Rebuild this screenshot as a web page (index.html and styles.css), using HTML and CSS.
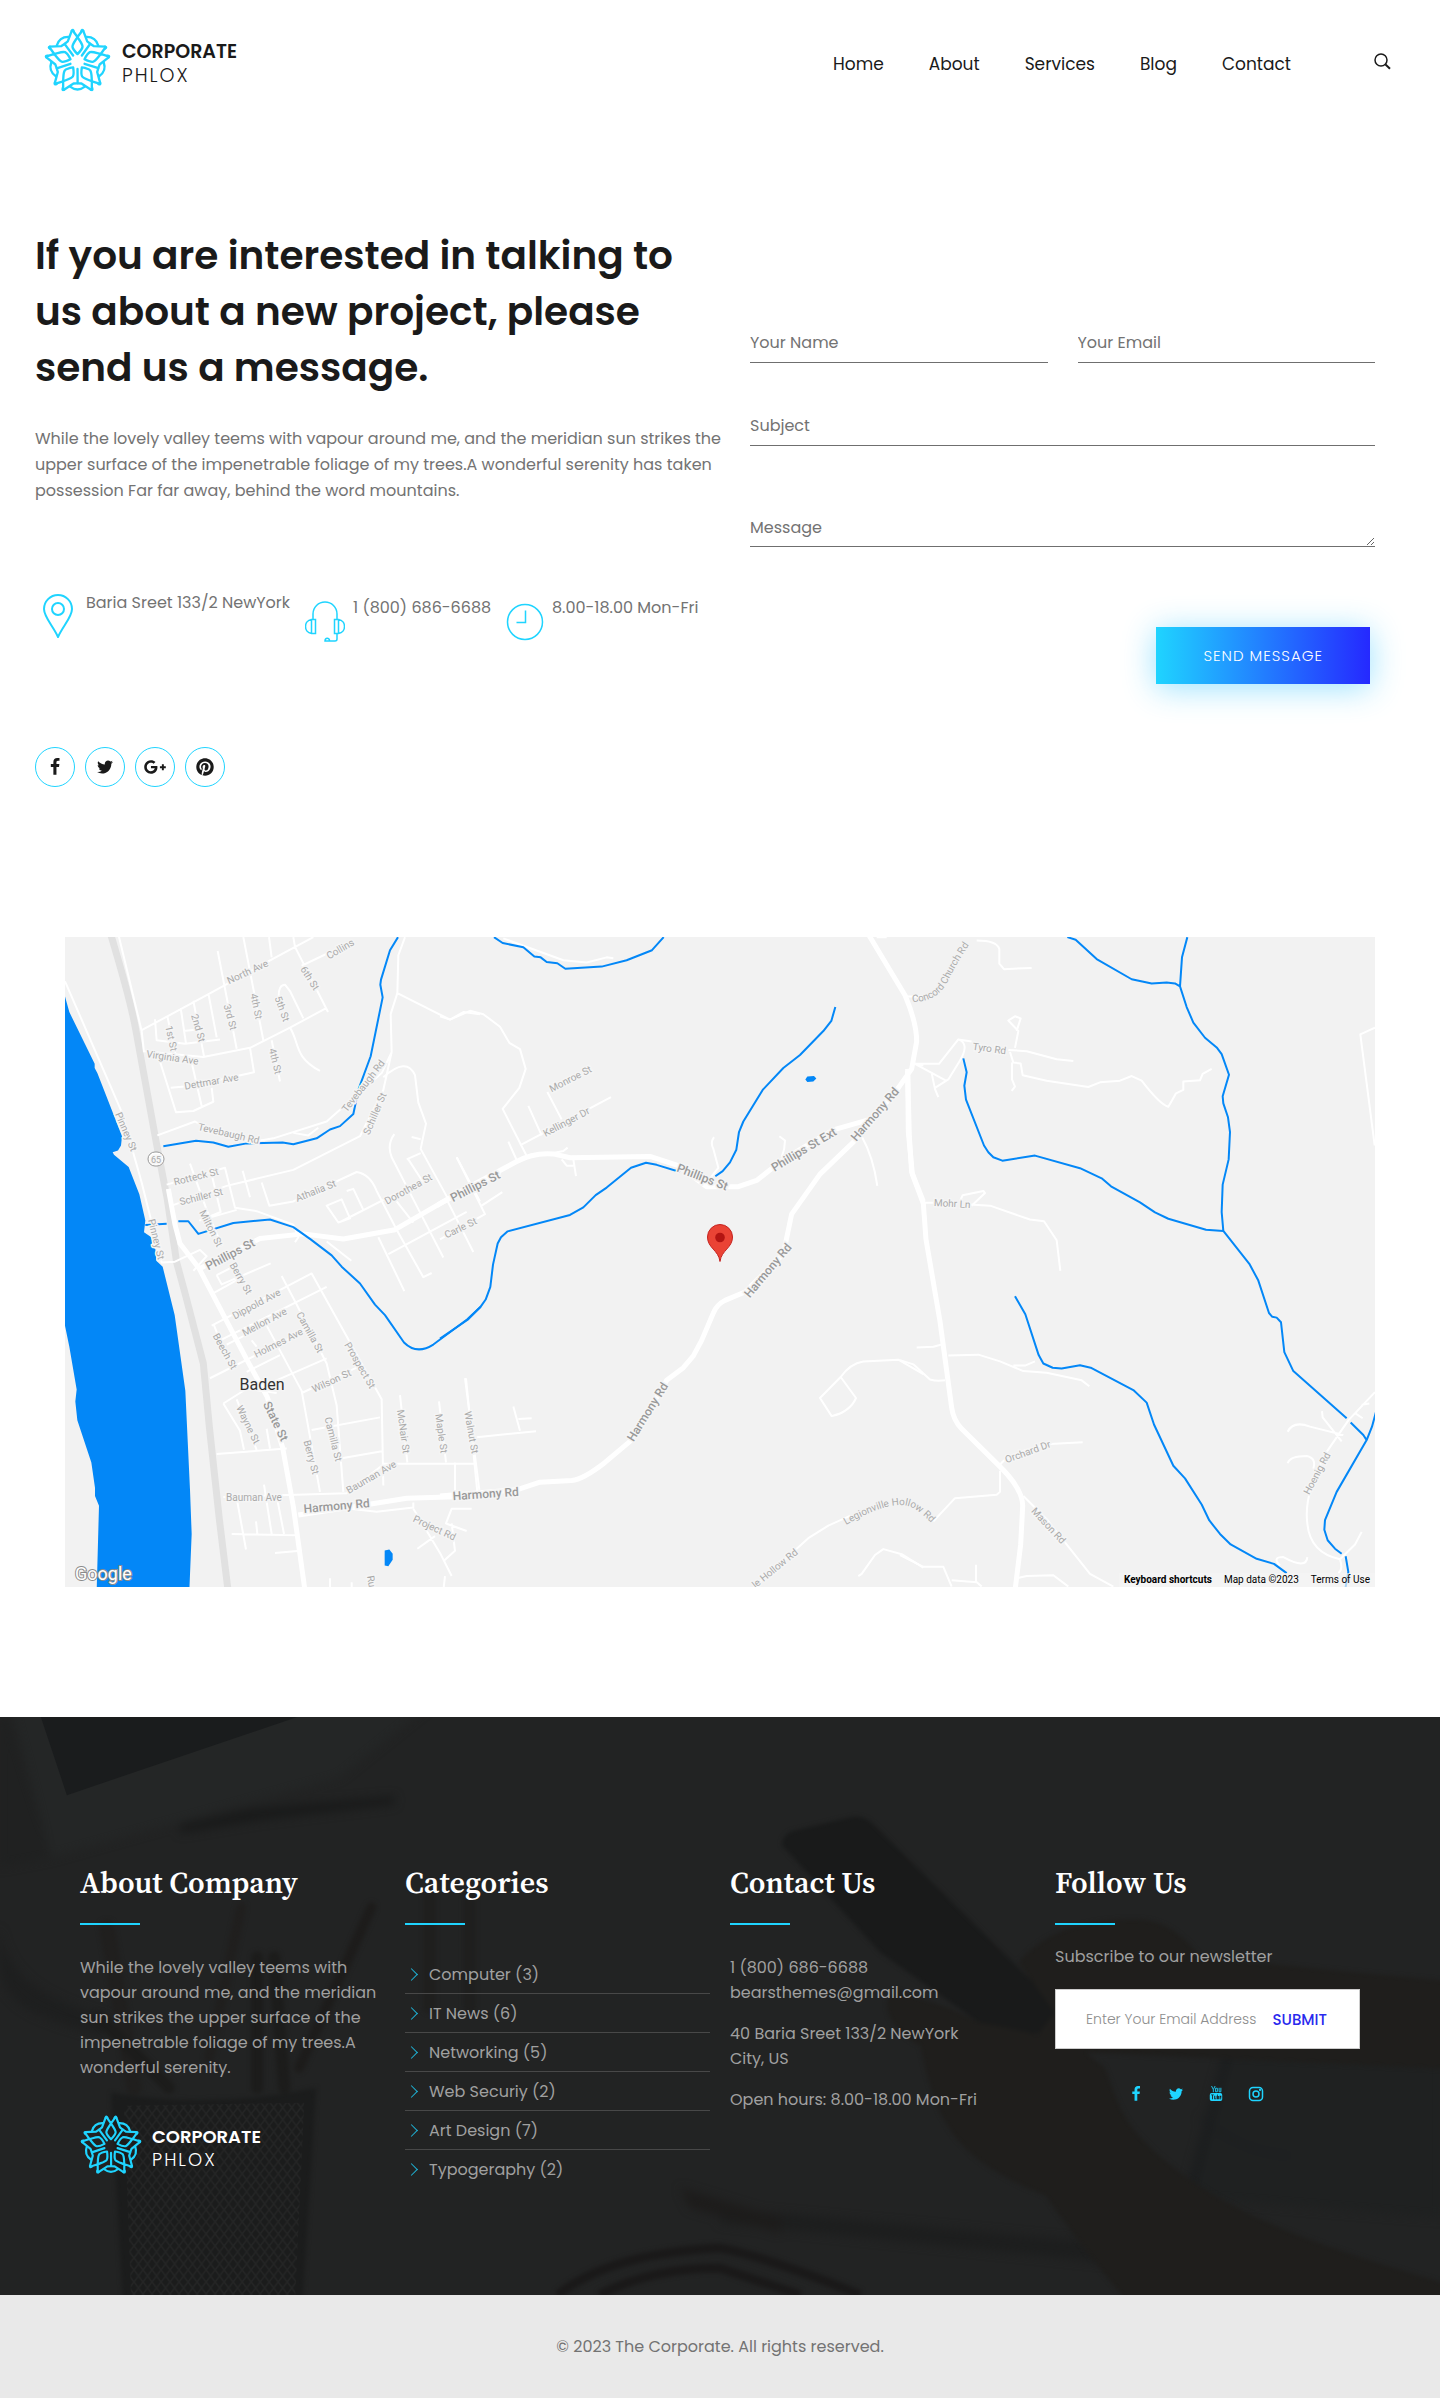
FILE: index.html
```html
<!DOCTYPE html>
<html lang="en">
<head>
<meta charset="utf-8">
<meta name="viewport" content="width=device-width, initial-scale=1">
<title>Contact – Corporate Phlox</title>
<link rel="stylesheet" href="styles.css">
</head>
<body>
<svg class="sprite" aria-hidden="true">
  <symbol id="phlox" viewBox="-100 -100 200 200">
    <g id="petal" fill="none" stroke="currentColor" stroke-width="7" stroke-linejoin="round" stroke-linecap="round">
      <path d="M-14 -92L0 -73C8 -60 15 -52 15 -44Q14 -36 0 -22M14 -92L0 -73C-8 -60 -15 -52 -15 -44Q-14 -36 0 -22"/>
      <path d="M-17 -92Q-14 -98 -11 -90M17 -92Q14 -98 11 -90"/>
      <path d="M-17 -92L-29 -60L-38 -53M17 -92L29 -60L38 -53L13 -18"/>
      <path d="M-22 75Q0 92 22 75"/>
    </g>
    <use href="#petal" transform="rotate(72)"/>
    <use href="#petal" transform="rotate(144)"/>
    <use href="#petal" transform="rotate(216)"/>
    <use href="#petal" transform="rotate(288)"/>
  </symbol>
  <symbol id="facebook" viewBox="0 0 1792 1792"><path d="M1343 12v264h-157q-86 0-116 36t-30 108v189h293l-39 296h-254v759h-306v-759h-255v-296h255v-218q0-186 104-288.500t277-102.500q147 0 228 12z"/></symbol>
  <symbol id="twitter" viewBox="0 0 1792 1792"><path d="M1684 408q-67 98-162 167 1 14 1 42 0 130-38 259.500t-115.500 248.500-184.500 210.500-258 146-323 54.500q-271 0-496-145 35 4 78 4 225 0 401-138-105-2-188-64.500t-114-159.500q33 5 61 5 43 0 85-11-112-23-185.500-111.500t-73.500-205.500v-4q68 38 146 41-66-44-105-115t-39-154q0-88 44-163 121 149 294.500 238.500t371.500 99.500q-8-38-8-74 0-134 94.500-228.500t228.500-94.500q140 0 236 102 109-21 205-78-37 115-142 178 93-10 186-50z"/></symbol>
  <symbol id="gplus" viewBox="0 0 640 512"><path d="M386.061 228.496c1.834 9.692 3.143 19.384 3.143 31.956C389.204 370.205 315.599 448 204.800 448c-106.084 0-192-85.915-192-192s85.916-192 192-192c51.864 0 95.083 18.859 128.611 50.292l-52.126 50.030c-14.145-13.621-39.028-29.599-76.485-29.599-65.484 0-118.920 54.221-118.920 121.277 0 67.056 53.436 121.277 118.920 121.277 75.961 0 104.513-54.745 108.965-82.773H204.800v-66.009h181.261zm185.406 6.437V179.200h-56.001v55.733h-55.733v56.001h55.733v55.733h56.001v-55.733H627.200v-56.001h-55.733z"/></symbol>
  <symbol id="pinterest" viewBox="0 0 496 512"><path d="M496 256c0 137-111 248-248 248-25.600 0-50.200-3.900-73.400-11.100 10.100-16.500 25.200-43.500 30.800-65 3-11.600 15.400-59 15.400-59 8.100 15.400 31.700 28.500 56.800 28.500 74.800 0 128.700-68.800 128.700-154.300 0-81.900-66.900-143.200-152.900-143.200-107 0-163.900 71.800-163.900 150.100 0 36.400 19.400 81.700 50.300 96.100 4.700 2.200 7.200 1.200 8.300-3.300.8-3.400 5-20.300 6.900-28.100.6-2.500.3-4.700-1.700-7.100-10.100-12.500-18.300-35.300-18.300-56.600 0-54.700 41.400-107.600 112-107.600 60.900 0 103.600 41.500 103.600 100.900 0 67.100-33.900 113.600-78 113.600-24.300 0-42.600-20.100-36.700-44.800 7-29.500 20.500-61.300 20.500-82.600 0-19-10.200-34.900-31.400-34.900-24.900 0-44.900 25.700-44.900 60.200 0 22 7.400 36.800 7.400 36.800s-24.500 103.800-29 123.200c-5 21.400-3 51.600-.9 71.200C65.400 450.900 0 361.100 0 256 0 119 111 8 248 8s248 111 248 248z"/></symbol>
</svg>

<header class="site-header">
  <a class="logo" href="#">
    <svg class="logo-mark" aria-hidden="true"><use href="#phlox"/></svg>
    <span class="logo-text"><b>CORPORATE</b><span>PHLOX</span></span>
  </a>
  <nav class="main-nav" aria-label="Main">
    <a href="#">Home</a><a href="#">About</a><a href="#">Services</a><a href="#">Blog</a><a href="#">Contact</a>
  </nav>
  <button class="search" type="button" aria-label="Search">
    <svg viewBox="0 0 17 17" width="17" height="17" fill="none" stroke="currentColor"><circle cx="7" cy="7" r="6" stroke-width="1.500"/><path d="M11.500 11.500L16 15.800" stroke-width="2"/></svg>
  </button>
</header>

<main>
  <section class="contact">
    <div class="intro">
      <h1>If you are interested in talking to us about a new project, please send us a message.</h1>
      <p>While the lovely valley teems with vapour around me, and the meridian sun strikes the upper surface of the impenetrable foliage of my trees.A wonderful serenity has taken possession Far far away, behind the word mountains.</p>
      <ul class="info">
        <li class="place">
          <svg viewBox="0 0 30 44" width="30" height="44"><path d="M15 43C10 32 1 23 1 15a14 14 0 0 1 28 0C29 23 20 32 15 43z"/><circle cx="15" cy="15" r="6"/></svg>
          <span>Baria Sreet 133/2 NewYork</span>
        </li>
        <li>
          <svg class="thin" viewBox="0 0 40 41" width="40" height="41"><path d="M8 18V13a12 12 0 0 1 24 0v5M6.500 18.500h4v14h-4zM29.500 18.500h4v14h-4zM6.500 18.500C-1.500 19.500 -1.500 31.500 6.500 32.500M33.500 18.500C41.500 19.500 41.500 31.500 33.500 32.500M32 33v5q0 2-2 2H20c0-3.500 4.500-3.500 4.500-.5"/></svg>
          <span>1 (800) 686-6688</span>
        </li>
        <li>
          <svg class="clock" viewBox="0 0 38 38" width="38" height="38"><circle cx="19" cy="19" r="17.500"/><path d="M19.500 7.500v12H10.500"/></svg>
          <span>8.00-18.00 Mon-Fri</span>
        </li>
      </ul>
      <div class="social-round">
        <a href="#" aria-label="Facebook"><svg><use href="#facebook"/></svg></a>
        <a href="#" aria-label="Twitter"><svg><use href="#twitter"/></svg></a>
        <a href="#" aria-label="Google Plus"><svg class="wide"><use href="#gplus"/></svg></a>
        <a href="#" aria-label="Pinterest"><svg><use href="#pinterest"/></svg></a>
      </div>
    </div>
    <form class="message-form">
      <div class="pair">
        <input type="text" aria-label="Your Name" placeholder="Your Name">
        <input type="email" aria-label="Your Email" placeholder="Your Email">
      </div>
      <input type="text" aria-label="Subject" placeholder="Subject">
      <textarea aria-label="Message" placeholder="Message"></textarea>
      <button class="send" type="submit">SEND MESSAGE</button>
    </form>
  </section>

  <section class="map" aria-label="Map of Baden">
    <svg class="map-canvas" viewBox="0 0 1310 650" preserveAspectRatio="xMidYMid slice">
      <!-- western sheet -->
      <g transform="translate(-5 -7) scale(.33333 .42088)">
        <path class="water" d="M15 158L28 195L104 318V328L112 340L186 490L183 512L174 524L158 528L162 534L206 563L238 628L256 690L252 718L274 730L277 752L286 758L289 786L308 800L344 915L376 1095L390 1330L395 1435L388 1570H110L117 1368L105 1345V1325L94 1265L52 1165L46 1120L50 1092L28 990L15 940z"/>
        <path class="water" d="M974 1474L988 1472L998 1482V1496L985 1512L974 1510z"/>
        <path class="hwy" d="M152 10C190 110 215 180 228 240L290 510L322 640L350 790L374 860L430 1030L448 1180L478 1400L505 1575"/>
        <path class="r5" d="M325 615L345 700L360 745L418 805L560 1020L622 1110L668 1230L700 1370L735 1570M418 805L600 733L730 722L850 734L1005 712L1140 650L1320 575M715 1390L900 1368L1040 1350L1260 1345"/>
        <path class="r2" d="M175 10L245 240L252 290M15 122L185 432L245 600L305 790L345 788L420 760L440 775L400 810M245 238L440 155L640 68L760 17M252 288L430 302L570 280L690 232L800 185M322 205L348 300M285 212L290 262L375 270L480 260M362 185L378 270M400 168L432 300M445 150L470 255M473 50L530 282M550 17L610 262M627 17L635 65M700 17L705 40L804 195M725 85L870 30M656 160Q655 130 675 130L690 145L730 210M690 232C720 270 700 300 780 335M635 262L660 360M570 280L582 338L400 370L332 375M295 300L348 433L400 430L460 408L455 375M395 315L425 418M370 240L420 236"/>
        <path class="r2" d="M292 488L405 455C500 500 560 510 640 495L800 455L965 340L995 290L992 200L1012 150L1015 60L1035 17M700 482L745 488L775 470M995 290L970 380L900 490L700 570L500 608L335 655M1012 150L1170 213L1210 195L1260 200M970 350Q1040 300 1065 345L1075 410L1098 460L1082 520L1165 640M1040 545L1082 530M1055 492L1082 497M320 605L495 565L525 660L590 668L700 700L715 730L705 742M390 555L440 665L480 740M450 565L482 670L420 690L530 665M548 572L570 635M605 600L628 655L700 645L890 575Q930 580 950 620L1010 712L1090 825L1115 815M1003 485Q980 510 995 540L1060 640L1150 778M845 640L800 655L835 695L870 685zM860 620L880 615L910 665M845 692L1060 605M985 770L1220 670M955 730L1033 858M1045 545L1090 600M1010 645L1060 695M800 740L874 786M1190 540L1260 645"/>
        <path class="r2" d="M470 820L485 842L632 792M455 865L540 828M470 820L520 800M455 940L755 816L965 1115L970 1320M460 935L480 975L800 848M500 985L650 925M450 1065L740 950M575 975L590 990M665 822L710 890L800 1030L830 1130L850 1335M620 940L725 1095L780 1335M725 1100L890 1040M560 1050L660 1010M620 1080L800 1018M490 1125L560 1090L650 1100M490 1125L540 1190L552 1235M530 1115L590 1235M620 1185L630 1232M470 1245L680 1232M755 1188L960 1158M845 1255L970 1238M1020 1105L1042 1265M1137 1120L1158 1265M1218 1065L1252 1335M970 1268H1250M1185 1265V1340M490 1347L860 1338L970 1270M530 1350L558 1472M612 1318L635 1435M650 1345L672 1435M515 1435L715 1438M588 1405L592 1435M645 1480L720 1475M870 1375L950 1382L1060 1372V1360M1060 1375L1140 1480L1175 1535M1235 1375H1175L1158 1410L1220 1428M1175 1410L1185 1475L1150 1500M1072 1470L1125 1440M810 1540V1570M875 1550V1570M1155 1535L1150 1570"/>
        <path class="creek" d="M310 514L408 501L460 505L505 515L560 507L668 505L700 509L770 495L810 474L840 466L880 437L895 380L932 300L968 160L961 130L963 118L990 48L1014 17M256 701L320 698M355 692H385L415 722L520 696L630 688L700 706L752 735L815 773L845 800L900 840L945 890L975 915L1032 980Q1070 1010 1120 985L1222 925L1262 895"/>
      </g>
      <!-- middle sheet -->
      <g transform="translate(375 -7) scale(.33333 .42088)">
        <path class="r5" d="M1285 10L1395 155Q1430 220 1430 265L1415 330L1375 375L1245 500L1140 580L1055 675L1030 770L915 860L855 880Q830 890 820 910L785 975L760 1012L730 1040L680 1070L570 1215L495 1265Q430 1305 395 1308L300 1312L230 1330L0 1345M-10 655L60 622L230 550Q280 528 340 532L390 541L630 538L715 560L800 610H895L950 595L1030 545L1180 475L1290 450M1403 335L1408 490L1415 575L1450 645"/>
        <path class="r2" d="M190 20L370 72L440 77L500 65L520 67M0 205L30 213L90 192L130 200L180 230L208 268L240 283L257 330L238 375L188 425L262 540M240 512L513 397M265 418L305 488M322 385L365 450M205 503L232 550M340 530L370 525L383 517M365 545L380 560H400M400 545L408 585M50 540L135 675L0 735M125 655L187 623M20 640L100 765M822 492Q810 505 820 520L835 565L810 590M1018 490L1035 500Q1035 520 1025 540M1265 490Q1300 540 1312 608M75 1065L118 1330M110 1205L288 1191M220 1132L240 1190M235 1162L275 1160M1202 1062L1140 1112L1175 1155Q1230 1145 1248 1112zM1202 1062Q1230 1030 1270 1025L1375 1021L1450 1055M930 1570L1105 1445L1165 1415L1230 1392M1255 1535L1265 1530L1305 1485L1330 1471L1385 1483L1450 1515M1310 17H1340M1400 158H1450M1425 318L1450 322"/>
        <path class="creek" d="M162 17L188 31L250 41L283 63L302 65L320 76L352 79L376 92L485 87L560 72L636 48L671 17M1186 183L1174 216L1150 240L1080 297L1030 328L968 380L910 455L897 480L889 522L870 552L848 573L826 585M720 575L650 558L618 553L573 565L500 612L467 630L430 659L390 677L203 716L183 730L173 745L159 795L151 848L137 878L122 895L83 926L0 971"/>
        <path class="water" d="M1096 355L1102 348L1122 347L1129 353L1120 360L1102 361z"/>
      </g>
      <!-- eastern sheet -->
      <g transform="translate(835 -7) scale(.33333 .42088)">
        <path class="r5" d="M23 330L25 480L37 580L70 650L78 735L120 930L155 1135Q160 1165 185 1185L300 1275Q370 1330 368 1370L362 1460L345 1570M0 125"/>
        <path class="r2" d="M230 25Q290 25 298 45V80L312 93L395 90M45 318H117L175 260L215 265M175 260Q210 270 180 310L145 355L105 375M45 318L138 358M95 340L105 378L115 397M325 285L380 288L470 307L520 311M345 280L355 240L325 215L345 205L362 210L350 240M330 290L340 315L362 317L368 345L440 358L565 373L600 362L660 358L695 347L725 358Q780 415 805 420Q820 400 828 388L850 380V360L900 357L908 342L935 330M336 315V355L345 372L335 382M75 648H105M210 652L270 655L390 688L432 692L470 737L481 810M180 645L188 630L250 620L255 625L215 655M50 992L100 990L125 985M145 1011L235 1009L300 1025L370 1048L440 1052L545 1070L568 1084M340 1035L375 1035L405 1025M0 1022L40 1032L90 1068Q110 1073 135 1070M300 1270Q330 1240 450 1221L548 1217M300 1285V1335L290 1342L165 1350L100 1405M370 1345L440 1400L570 1530L640 1560M0 1485L70 1513H130L155 1560M155 1545L230 1550M228 1508V1548L245 1560M350 1540L380 1535L460 1533L505 1560M1425 232L1381 248L1424 512M1425 1098L1345 1165L1280 1240Q1210 1340 1222 1410Q1230 1480 1320 1495L1365 1460L1385 1430M1320 1495Q1330 1520 1315 1528M1163 1192Q1180 1165 1230 1180L1330 1200M1266 1143L1268 1158L1325 1215M1365 1148L1388 1160M1385 1128L1408 1125M1163 1267Q1170 1250 1220 1250Q1250 1255 1240 1280M1140 1510Q1115 1490 1150 1490Q1220 1520 1222 1490"/>
        <path class="creek" d="M502 17L527 23L590 69L695 117L755 127L800 125L825 127L840 134M862 17L846 65L840 134L860 183L880 220L915 256L950 279L965 295L987 344L968 395L970 412L984 445L990 480L986 545L968 605L965 670L970 715L918 712L805 686L765 671L720 647L633 609L605 590L540 566L405 536L307 548L280 540L265 528L252 512L198 403L193 370L200 338L190 305M970 715L1048 793L1075 833L1107 910L1117 919L1130 921L1143 932L1153 1003L1180 1048L1340 1160M1352 1170L1390 1200L1400 1212L1416 1180L1428 1145M1400 1212L1310 1335L1275 1402L1273 1425L1283 1450L1305 1470L1325 1482M1337 1488L1345 1525L1335 1570M345 870L376 913L416 1010L430 1030L458 1040L485 1042L540 1034L572 1040L700 1093L740 1123L762 1175L820 1273L855 1303L905 1365L928 1403L960 1435L992 1460L1070 1494L1122 1506L1160 1528"/>
      </g>
      <rect class="shield" x="83" y="215" width="16" height="14" rx="7"/>
      <path id="legionville" fill="none" d="M781 588C800 577 820 568 836 568C850 568 862 580 880 602"/>
      <path id="concord" fill="none" d="M847 65C866 65 877 57 884 42C890 30 898 16 912 -4"/>
      <g class="street">
        <text x="91" y="226" font-size="9">65</text>
        <text transform="translate(184 38) rotate(-25)">North Ave</text>
        <text transform="translate(277 15) rotate(-30)">Collins</text>
        <text transform="translate(242 43) rotate(58)">6th St</text>
        <text transform="translate(214 73) rotate(70)">5th St</text>
        <text transform="translate(188 70) rotate(78)">4th St</text>
        <text transform="translate(162 81) rotate(75)">3rd St</text>
        <text transform="translate(130 92) rotate(74)">2nd St</text>
        <text transform="translate(103 102) rotate(78)">1st St</text>
        <text transform="translate(107 124) rotate(8)">Virginia Ave</text>
        <text transform="translate(147 148) rotate(-10)">Dettmar Ave</text>
        <text transform="translate(207 125) rotate(76)">4th St</text>
        <text transform="translate(58 196) rotate(67)">Pinney St</text>
        <text transform="translate(163 200) rotate(13)">Tevebaugh Rd</text>
        <text transform="translate(301 151) rotate(-52)">Tevebaugh Rd</text>
        <text transform="translate(313 178) rotate(-67)">Schiller St</text>
        <text transform="translate(132 243) rotate(-14)">Rotteck St</text>
        <text transform="translate(137 263) rotate(-14)">Schiller St</text>
        <text transform="translate(252 257) rotate(-22)">Athalia St</text>
        <text transform="translate(345 255) rotate(-29)">Dorothea St</text>
        <text transform="translate(397 294) rotate(-26)">Carle St</text>
        <text transform="translate(143 293) rotate(63)">Milton St</text>
        <text transform="translate(88 303) rotate(76)">Pinney St</text>
        <text transform="translate(173 343) rotate(60)">Berry St</text>
        <text transform="translate(193 370) rotate(-28)">Dippold Ave</text>
        <text transform="translate(201 388) rotate(-28)">Mellon Ave</text>
        <text transform="translate(215 409) rotate(-27)">Holmes Ave</text>
        <text transform="translate(242 397) rotate(61)">Camilla St</text>
        <text transform="translate(292 430) rotate(60)">Prospect St</text>
        <text transform="translate(157 416) rotate(61)">Beech St</text>
        <text transform="translate(268 447) rotate(-25)">Wilson St</text>
        <text transform="translate(180 489) rotate(64)">Wayne St</text>
        <text transform="translate(265 503) rotate(76)">Camilla St</text>
        <text transform="translate(243 521) rotate(75)">Berry St</text>
        <text transform="translate(335 495) rotate(82)">McNair St</text>
        <text transform="translate(373 497) rotate(82)">Maple St</text>
        <text transform="translate(403 496) rotate(80)">Walnut St</text>
        <text transform="translate(308 543) rotate(-30)">Bauman Ave</text>
        <text x="189" y="564">Bauman Ave</text>
        <text transform="translate(368 594) rotate(25)">Project Rd</text>
        <text transform="translate(303 645) rotate(80)">Ru</text>
        <text transform="translate(507 145) rotate(-27)">Monroe St</text>
        <text transform="translate(503 188) rotate(-28)">Kellinger Dr</text>
        <text transform="translate(712 634) rotate(-39)">le Hollow Rd</text>
        <text transform="translate(924 115) rotate(8)">Tyro Rd</text>
        <text transform="translate(887 270) rotate(3)">Mohr Ln</text>
        <text transform="translate(964 518) rotate(-20)">Orchard Dr</text>
        <text transform="translate(981 591) rotate(47)">Mason Rd</text>
        <text transform="translate(1255 538) rotate(-62)">Hoenig Rd</text>
        <text class="along"><textPath href="#legionville">Legionville Hollow Rd</textPath></text>
        <text class="along"><textPath href="#concord">Concord Church Rd</textPath></text>
      </g>
      <g class="street major">
        <text transform="translate(412 253) rotate(-27)">Phillips St</text>
        <text transform="translate(167 321) rotate(-28)">Phillips St</text>
        <text transform="translate(207 486) rotate(64)">State St</text>
        <text transform="translate(272 573) rotate(-5)">Harmony Rd</text>
        <text transform="translate(421 561) rotate(-4)">Harmony Rd</text>
        <text transform="translate(636 244) rotate(21)">Phillips St</text>
        <text transform="translate(741 216) rotate(-31)">Phillips St Ext</text>
        <text transform="translate(813 180) rotate(-49)">Harmony Rd</text>
        <text transform="translate(706 336) rotate(-50)">Harmony Rd</text>
        <text transform="translate(586 477) rotate(-58)">Harmony Rd</text>
      </g>
      <text class="town" x="197" y="453">Baden</text>
      <text class="google" x="10" y="643">Google</text>
      <path d="M655 324.500C653.500 313 642.500 311 642.500 300a12.500 12.500 0 0 1 25 0C667.500 311 656.500 313 655 324.500z" fill="#ea4335" stroke="#c5221f"/>
      <circle cx="655" cy="300.500" r="4.800" fill="#b31412"/>
    </svg>
    <div class="map-legal">
      <button type="button">Keyboard shortcuts</button>
      <span>Map data ©2023</span>
      <a href="#">Terms of Use</a>
    </div>
  </section>
</main>

<footer class="site-footer">
  <svg class="desk" viewBox="0 0 1440 577" preserveAspectRatio="xMidYMid slice" aria-hidden="true">
    <defs>
      <pattern id="mesh" width="9" height="12" patternUnits="userSpaceOnUse"><path d="M0 0L9 12M9 0L0 12" stroke="#242525" stroke-width="1.500"/></pattern>
      <filter id="soft" color-interpolation-filters="sRGB"><feGaussianBlur stdDeviation="5"/></filter>
      <filter id="softer" color-interpolation-filters="sRGB"><feGaussianBlur stdDeviation="2"/></filter>
    </defs>
    <g filter="url(#soft)">
      <path d="M10 -20L52 140L340 60L440 -20z" fill="#242626"/>
      <path d="M0 0H10L52 140L0 150z" fill="#202121"/>
      <path d="M181 107L250 92L395 79V87L260 103L181 116z" fill="#191a1a"/>
      <path d="M0 210C10 260 40 280 110 300V320C40 300 0 290 0 240z" fill="#1e1f1f"/>
      <path d="M720 490L1100 525L1110 545L720 505z" fill="#1d1e1e"/>
      <path d="M1240 290L1440 320V500L1190 480L1240 290z" fill="#1f2121"/>
      <path d="M1238 295L1190 470" stroke="#1b1d1e" stroke-width="8"/>
      <path d="M1200 400Q1240 435 1290 438" stroke="#1c1e20" stroke-width="4" fill="none"/>
      <path d="M680 470L780 500V515L690 490z" fill="#1d1c1b"/>
    </g>
    <path d="M42 0H298L68 78z" fill="#1a1c1d"/>
    <g filter="url(#softer)">
      <path d="M782 128Q782 118 792 114L850 100Q862 97 872 106L1058 290L1045 312Q1035 320 1015 313L977 304L880 235z" fill="#191a1a"/>
      <path d="M894 272C880 285 886 310 920 328C935 400 950 440 1045 478C1060 500 1090 540 1129 587H1460V570C1320 530 1240 500 1180 455C1120 410 1120 390 1104 350L1085 335L1460 352V265L1200 240C1180 215 1160 200 1130 202C1070 203 1040 220 1018 245L1054 295L1037 317L977 304L950 291z" fill="#1f1e1c"/>
      <g stroke-linecap="round" fill="none">
        <path d="M108 210L135 370" stroke="#201f1e" stroke-width="15"/>
        <path d="M242 190L210 340" stroke="#201f1e" stroke-width="10"/>
        <path d="M372 190L300 350" stroke="#1d1c1b" stroke-width="10"/>
        <path d="M258 240V370M275 240L285 370M100 300L170 370" stroke="#1c1c1b" stroke-width="12"/>
        <path d="M430 180V290M470 180V290" stroke="#1f1f1e" stroke-width="12"/>
      </g>
      <path d="M112 375Q215 392 317 370L303 587H124z" fill="#1b1c1c"/>
      <path d="M558 577Q610 535 720 530Q770 540 860 577M600 577Q650 550 720 550L800 577" fill="none" stroke="#1a1919" stroke-width="9"/>
    </g>
    <path d="M125 388L305 385L296 577H132z" fill="url(#mesh)"/>
  </svg>
  <div class="columns">
    <section>
      <h2>About Company</h2>
      <p>While the lovely valley teems with vapour around me, and the meridian sun strikes the upper surface of the impenetrable foliage of my trees.A wonderful serenity.</p>
      <a class="logo logo-footer" href="#">
        <svg class="logo-mark" aria-hidden="true"><use href="#phlox"/></svg>
        <span class="logo-text"><b>CORPORATE</b><span>PHLOX</span></span>
      </a>
    </section>
    <section>
      <h2>Categories</h2>
      <ul class="categories">
        <li><a href="#">Computer (3)</a></li>
        <li><a href="#">IT News (6)</a></li>
        <li><a href="#">Networking (5)</a></li>
        <li><a href="#">Web Securiy (2)</a></li>
        <li><a href="#">Art Design (7)</a></li>
        <li><a href="#">Typogeraphy (2)</a></li>
      </ul>
    </section>
    <section>
      <h2>Contact Us</h2>
      <p>1 (800) 686-6688<br>bearsthemes@gmail.com</p>
      <p>40 Baria Sreet 133/2 NewYork<br>City, US</p>
      <p>Open hours: 8.00-18.00 Mon-Fri</p>
    </section>
    <section class="follow">
      <h2>Follow Us</h2>
      <p>Subscribe to our newsletter</p>
      <form class="subscribe">
        <input type="email" aria-label="Email address" placeholder="Enter Your Email Address">
        <button type="submit">SUBMIT</button>
      </form>
      <div class="social-plain">
        <a href="#" aria-label="Facebook"><svg><use href="#facebook"/></svg></a>
        <a href="#" aria-label="Twitter"><svg><use href="#twitter"/></svg></a>
        <a href="#" aria-label="YouTube"><svg viewBox="0 0 16 18"><path d="M3 0l2 4v3M7 0L5 4M7.500 2.500h2v4h-2zM11.500 2v4.500h2V2" fill="none" stroke="currentColor"/><path fill-rule="evenodd" d="M3 8h10q2 0 2 2v5q0 2-2 2H3q-2 0-2-2v-5q0-2 2-2zM2.500 9.500v1h1V15h1v-4.500h1v-1zM6 11v4h2.500v-4h-.8v3h-.8v-3zM9.200 9.500V15h2v-3.800h-1.200V9.500zM12 11v4h2v-1h-1.100v-.8H14V11z"/></svg></a>
        <a href="#" aria-label="Instagram"><svg viewBox="0 0 16 16" fill="none" stroke="currentColor" stroke-width="1.500"><rect x="1.500" y="1.500" width="13" height="13" rx="3.500"/><circle cx="8" cy="8" r="3"/><circle cx="12" cy="4" r=".4"/></svg></a>
      </div>
    </section>
  </div>
</footer>
<div class="copyright">© 2023 The Corporate. All rights reserved.</div>
</body>
</html>
```
FILE: styles.css
```css
* { box-sizing: border-box; }

body {
  margin: 0;
  background: #fff;
  color: #737373;
  font: 16px/26px Poppins, Inter, sans-serif;
}

a { color: inherit; text-decoration: none; }
h1, h2, p, ul { margin: 0; padding: 0; }
ul { list-style: none; }
input, textarea, button { font: inherit; }
button { padding: 0; border: 0; background: none; cursor: pointer; }
.sprite { position: absolute; width: 0; height: 0; }

/* Header */
.site-header {
  display: flex;
  align-items: center;
  padding: 28px 49px 0 44px;
}

.logo { display: flex; align-items: center; gap: 11px; color: #1a1a1a; }
.logo-mark { width: 67px; height: 67px; color: #1fd4ff; }
.logo-text { display: flex; flex-direction: column; padding-top: 4px; font-size: 19px; line-height: 24px; }
.logo-text b { font-weight: 600; }
.logo-text span { font-weight: 300; letter-spacing: 2px; }

.main-nav {
  display: flex;
  gap: 45px;
  margin: 0 83px 0 auto;
  padding-top: 4px;
  color: #1a1a1a;
  font-size: 17px;
}

.search { display: flex; color: #1a1a1a; }

/* Contact */
.contact {
  display: grid;
  grid-template-columns: 695fr 625fr;
  gap: 20px;
  padding: 133px 65px 0 35px;
}

h1 {
  max-width: 660px;
  color: #1a1a1a;
  font-size: 39px;
  font-weight: 600;
  line-height: 56px;
}

.intro p { margin-top: 30px; }

.info {
  display: grid;
  grid-template-columns: 262px 201px auto;
  margin-top: 86px;
  padding-left: 8px;
  white-space: nowrap;
}

.info li { display: flex; gap: 8px; padding-top: 5px; }
.info svg { flex: none; margin-top: 6px; fill: none; stroke: #1fd4ff; stroke-width: 2; }
.info .place { gap: 13px; padding: 0; }
.info .place svg { margin-top: 4px; }
.info svg.thin, .info svg.clock { stroke-width: 1.5; }
.info svg.clock { margin-top: 8px; }

.social-round { display: flex; gap: 10px; margin-top: 105px; }
.social-round a {
  display: grid;
  place-items: center;
  width: 40px;
  height: 40px;
  border: 1px solid #1fd4ff;
  border-radius: 50%;
}
.social-round svg { width: 18px; height: 18px; fill: #1a1a1a; }
.social-round svg.wide { width: 24px; }

.message-form {
  display: flex;
  flex-direction: column;
  gap: 43px;
  padding-top: 95px;
}
.pair { display: grid; grid-template-columns: 1fr 1fr; gap: 30px; }
.message-form input, .message-form textarea {
  width: 100%;
  height: 40px;
  padding: 0;
  border: 0;
  border-bottom: 1px solid #6f6f6f;
  border-radius: 0;
  background: none;
  color: #6f6f6f;
}
.message-form textarea { margin-top: 18px; padding: 8px 0 5px; }
::placeholder { color: #737373; opacity: 1; }

.send {
  align-self: flex-end;
  height: 57px;
  margin: 37px 5px 0 0;
  padding: 0 47px;
  background: linear-gradient(90deg, #1fd4ff, #2529ff);
  box-shadow: 0 4px 32px rgba(31, 190, 255, .45);
  color: #fff;
  font-size: 15px;
  font-weight: 300;
  letter-spacing: 1px;
}

/* Map */
.map { position: relative; margin: 150px 65px 130px; }
.map-canvas { display: block; width: 100%; height: 650px; background: #f2f2f2; font-family: Roboto, sans-serif; }
.map-canvas path { vector-effect: non-scaling-stroke; }
.water { fill: #0387f7; }
.hwy, .r5, .r2, .creek { fill: none; stroke: #fff; stroke-linejoin: round; }
.hwy { stroke: #e1e1e1; stroke-width: 7px; }
.r5 { stroke-width: 5px; }
.r2 { stroke-width: 2px; }
.creek { stroke: #0387f7; stroke-width: 2px; }
.shield { fill: #fff; stroke: #999; }
.street text, .town { text-anchor: middle; paint-order: stroke; stroke: #f5f5f5; stroke-width: 3px; }
.street { fill: #aaa; font-size: 10px; }
.street text.along { text-anchor: start; stroke-width: 1px; }
.street.major { fill: #999; font-size: 12px; font-weight: 500; }
.town { fill: #333; font-size: 16px; }
.google { fill: #fff; stroke: #8a8a8a; stroke-width: 2px; paint-order: stroke; font-size: 18px; }

.map-legal {
  position: absolute;
  right: 0;
  bottom: 0;
  display: flex;
  gap: 12px;
  padding: 0 5px;
  background: rgba(245, 245, 245, .7);
  color: #000;
  font: 10px/14px Roboto, sans-serif;
}
.map-legal button { font-weight: 700; }

/* Footer */
.site-footer {
  position: relative;
  overflow: hidden;
  padding: 142px 80px 106px;
  background: #222323;
  color: #a0a0a0;
  line-height: 25px;
}
.desk { position: absolute; inset: 0; width: 100%; height: 100%; }
.columns {
  position: relative;
  display: grid;
  grid-template-columns: repeat(4, minmax(0, 1fr));
  gap: 20px;
}

h2 {
  margin-bottom: 30px;
  color: #fff;
  font: 600 30px/48px "Source Serif Pro", "Source Serif 4", "Liberation Serif", serif;
}
h2::after { display: block; width: 60px; height: 2px; margin-top: 16px; background: #1fd4ff; content: ""; }
.columns p + p { margin-top: 16px; }

.logo-footer { margin-top: 35px; gap: 10px; color: #fff; }
.logo-footer .logo-mark { width: 62px; height: 62px; }
.logo-footer .logo-text { font-size: 18px; line-height: 23px; }

.categories li {
  display: flex;
  align-items: center;
  gap: 13px;
  height: 39px;
  padding-left: 2px;
  border-bottom: 1px solid #484848;
}
.categories li:last-child { border: 0; }
.categories li::before {
  width: 8px;
  height: 8px;
  border: solid #1fb4d8;
  border-width: 1px 1px 0 0;
  transform: rotate(45deg);
  content: "";
}

.follow h2 { margin-bottom: 19px; }
.subscribe {
  display: flex;
  align-items: center;
  height: 60px;
  margin-top: 20px;
  padding: 0 32px 0 30px;
  border: 1px solid #ccc;
  background: #fff;
}
.subscribe input { flex: 1; min-width: 0; padding: 0; border: 0; background: none; font-size: 14px; font-weight: 300; }
.subscribe input::placeholder { color: #8d8d8d; }
.subscribe button { color: #2a2aee; font-size: 15px; font-weight: 500; }

.social-plain { display: flex; justify-content: center; gap: 24px; margin-top: 37px; padding-right: 24px; color: #1fd4ff; }
.social-plain a { display: flex; }
.social-plain svg { width: 16px; height: 16px; fill: currentColor; }
.social-plain svg[fill="none"] { fill: none; }

.copyright { padding: 39px 20px; background: #e9e9e9; text-align: center; }
```
